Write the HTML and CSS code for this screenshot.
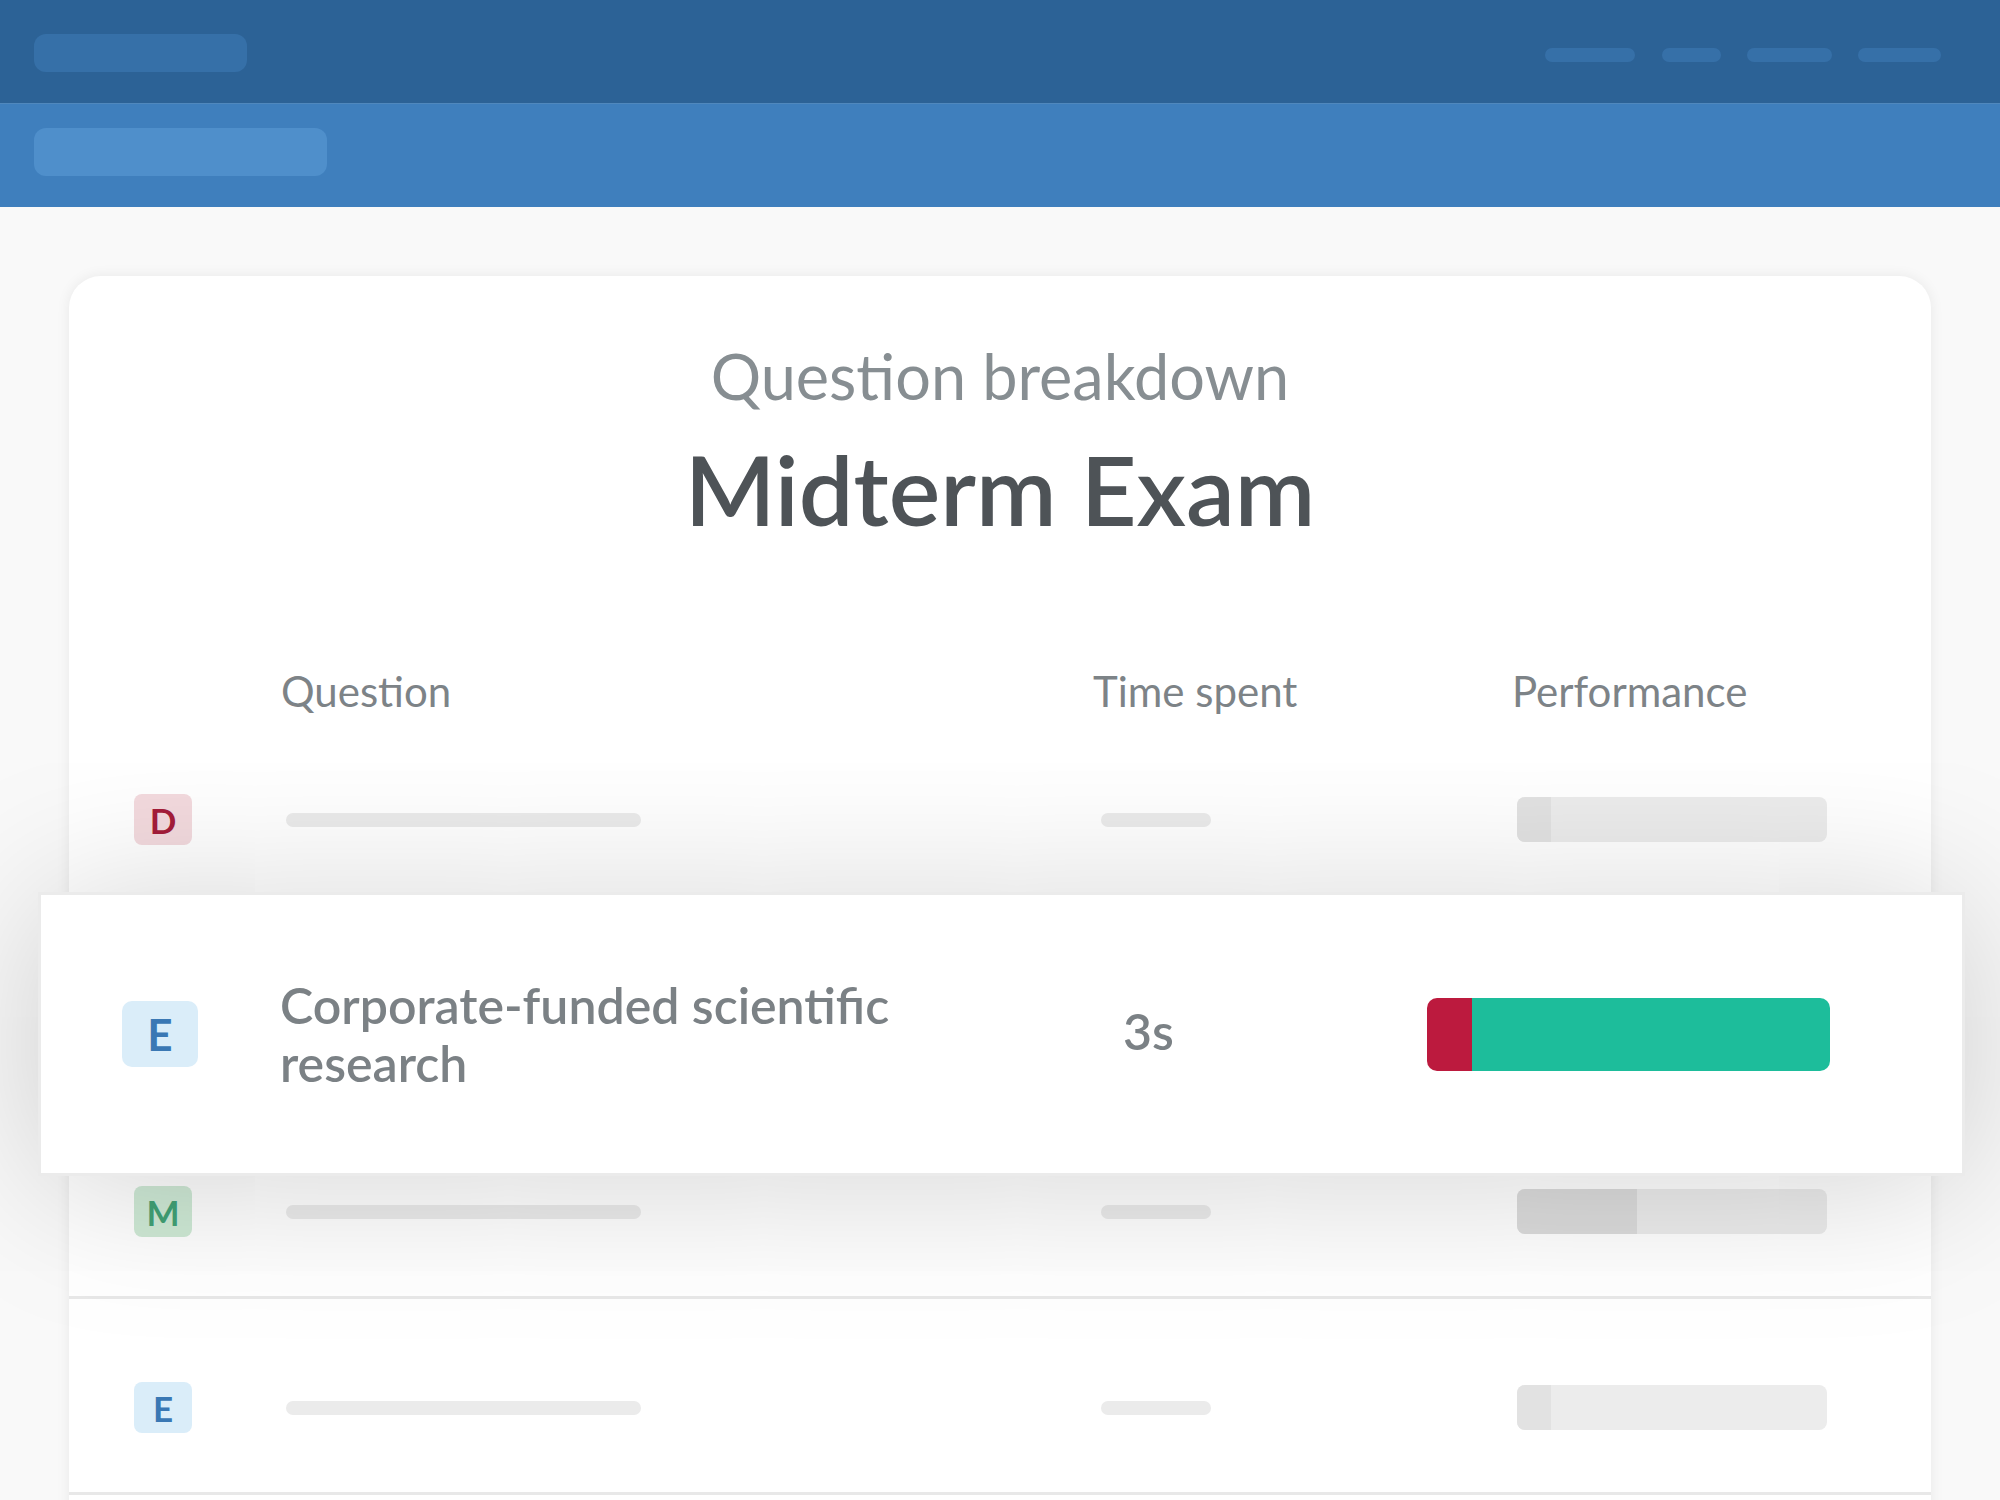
FILE: index.html
```html
<!DOCTYPE html>
<html lang="en">
<head>
<meta charset="utf-8">
<title>Question breakdown – Midterm Exam</title>
<link rel="stylesheet" href="styles.css">
</head>
<body>
<div class="page">
  <header class="topbar">
    <div class="logo-pill"></div>
    <nav class="nav">
      <span class="nav-pill nav-a"></span>
      <span class="nav-pill nav-b"></span>
      <span class="nav-pill nav-c"></span>
      <span class="nav-pill nav-d"></span>
    </nav>
  </header>
  <div class="subbar"><div class="sub-pill"></div></div>

  <main class="content">
    <section class="card">
      <p class="eyebrow">Question breakdown</p>
      <h1 class="title">Midterm Exam</h1>

      <div class="table">
        <div class="grid thead">
          <div></div>
          <div>Question</div>
          <div>Time spent</div>
          <div>Performance</div>
        </div>

        <div class="grid row">
          <div class="cell"><span class="badge badge-d">D</span></div>
          <div class="cell"><span class="ph ph-q"></span></div>
          <div class="cell"><span class="ph ph-t"></span></div>
          <div class="cell"><span class="ph-p"><span class="seg" style="width:34px"></span></span></div>
        </div>

        <div class="grid row">
          <div class="raised">
            <div class="rcell"><span class="badge-lg">E</span></div>
            <div class="rcell q-text">Corporate-funded scientific<br>research</div>
            <div class="rcell time">3s</div>
            <div class="rcell perf">
              <span class="perf-wrong" style="width:45px"></span>
              <span class="perf-right"></span>
            </div>
          </div>
        </div>

        <div class="grid row">
          <div class="cell"><span class="badge badge-m">M</span></div>
          <div class="cell"><span class="ph ph-q"></span></div>
          <div class="cell"><span class="ph ph-t"></span></div>
          <div class="cell"><span class="ph-p"><span class="seg seg-dark" style="width:120px"></span></span></div>
        </div>

        <div class="grid row">
          <div class="cell"><span class="badge badge-e">E</span></div>
          <div class="cell"><span class="ph ph-q"></span></div>
          <div class="cell"><span class="ph ph-t"></span></div>
          <div class="cell"><span class="ph-p"><span class="seg" style="width:34px"></span></span></div>
        </div>

        <div class="grid row"></div>
      </div>
    </section>
  </main>
</div>
</body>
</html>
```

FILE: styles.css
```css
html, body {
  margin: 0;
  padding: 0;
}

body {
  background: #f9f9f9;
  font-family: "Lato", "Open Sans", sans-serif;
}

.page {
  height: 1500px;
  overflow: hidden;
}

/* ---------- top bars ---------- */
.topbar {
  height: 104px;
  box-sizing: border-box;
  background: #2c6296;
  border-bottom: 1px solid #5088bd;
  display: flex;
  justify-content: space-between;
  align-items: flex-start;
  padding: 34px 59px 0 34px;
}

.logo-pill {
  width: 213px;
  height: 38px;
  border-radius: 12px;
  background: #3670a8;
}

.nav {
  display: flex;
  gap: 26px;
  margin-top: 14px;
}

.nav-pill {
  display: block;
  height: 14px;
  border-radius: 7px;
  background: #3670a8;
}

.nav-a { width: 90px; margin-right: 1px; }
.nav-b { width: 59px; }
.nav-c { width: 85px; }
.nav-d { width: 83px; }

.subbar {
  height: 103px;
  box-sizing: border-box;
  background: #3f7fbd;
  padding: 24px 34px 0;
}

.sub-pill {
  width: 293px;
  height: 48px;
  border-radius: 12px;
  background: #4f8fcb;
}

/* ---------- card ---------- */
.content {
  padding: 69px 69px 0;
}

.card {
  background: #ffffff;
  border-radius: 32px 32px 0 0;
  box-shadow: 0 0 14px rgba(0, 0, 0, 0.07);
  padding-top: 63px;
}

.eyebrow {
  margin: 0;
  text-align: center;
  font-size: 63px;
  line-height: 74px;
  font-weight: 400;
  color: #878e92;
}

.title {
  margin: 16px 0 0;
  text-align: center;
  font-size: 97px;
  line-height: 120px;
  font-weight: 600;
  color: #4e5357;
}

/* ---------- table ---------- */
.grid {
  display: grid;
  grid-template-columns: 147px 812px 419px 315px;
  padding: 0 104px 0 65px;
}

.thead {
  margin-top: 117px;
  height: 45px;
  align-items: end;
  font-size: 42px;
  line-height: 40px;
  color: #7d8387;
}

.row {
  position: relative;
  height: 196px;
  box-sizing: border-box;
  padding-top: 24px;
  border-bottom: 3px solid #e8e8e8;
  align-items: center;
}

.cell {
  display: flex;
  align-items: center;
}

.badge {
  width: 58px;
  height: 51px;
  border-radius: 8px;
  display: flex;
  align-items: center;
  justify-content: center;
  font-size: 35px;
  font-weight: 700;
}

.badge-d { background: #f3dade; color: #a51d3a; }
.badge-e { background: #daedf9; color: #3a78b4; }
.badge-m { background: #cfead6; color: #42a276; }

.ph {
  display: block;
  height: 14px;
  border-radius: 7px;
  background: #ebebeb;
}

.ph-q { width: 355px; margin-left: 5px; }
.ph-t { width: 110px; margin-left: 8px; }

.ph-p {
  display: flex;
  width: 310px;
  height: 45px;
  margin-left: 5px;
  border-radius: 8px;
  overflow: hidden;
  background: #ececec;
}

.seg {
  display: block;
  height: 100%;
  background: #e2e2e2;
}

.seg-dark { background: #dcdcdc; }

/* ---------- raised (highlighted) row ---------- */
.raised {
  position: absolute;
  left: -31px;
  top: -15px;
  z-index: 2;
  width: 1927px;
  height: 284px;
  box-sizing: border-box;
  border: 3px solid #ebebeb;
  background: #ffffff;
  box-shadow: 0 10px 160px rgba(0, 0, 0, 0.18);
  display: grid;
  grid-template-columns: 158px 840px 307px 403px;
  padding: 0 132px 0 81px;
  align-items: center;
}

.rcell {
  display: block;
}

.badge-lg {
  width: 76px;
  height: 66px;
  border-radius: 10px;
  display: flex;
  align-items: center;
  justify-content: center;
  background: #daedf9;
  color: #3a78b4;
  font-size: 44px;
  font-weight: 700;
}

.q-text {
  font-size: 50px;
  line-height: 58px;
  font-weight: 600;
  color: #7b8185;
}

.time {
  font-size: 50px;
  line-height: 58px;
  font-weight: 600;
  color: #7b8185;
  padding-left: 3px;
  margin-bottom: 6px;
}

.perf {
  display: flex;
  height: 73px;
  border-radius: 10px;
  overflow: hidden;
}

.perf-wrong {
  display: block;
  background: #bc1a3e;
}

.perf-right {
  display: block;
  flex: 1;
  background: #1dbd9b;
}
```
